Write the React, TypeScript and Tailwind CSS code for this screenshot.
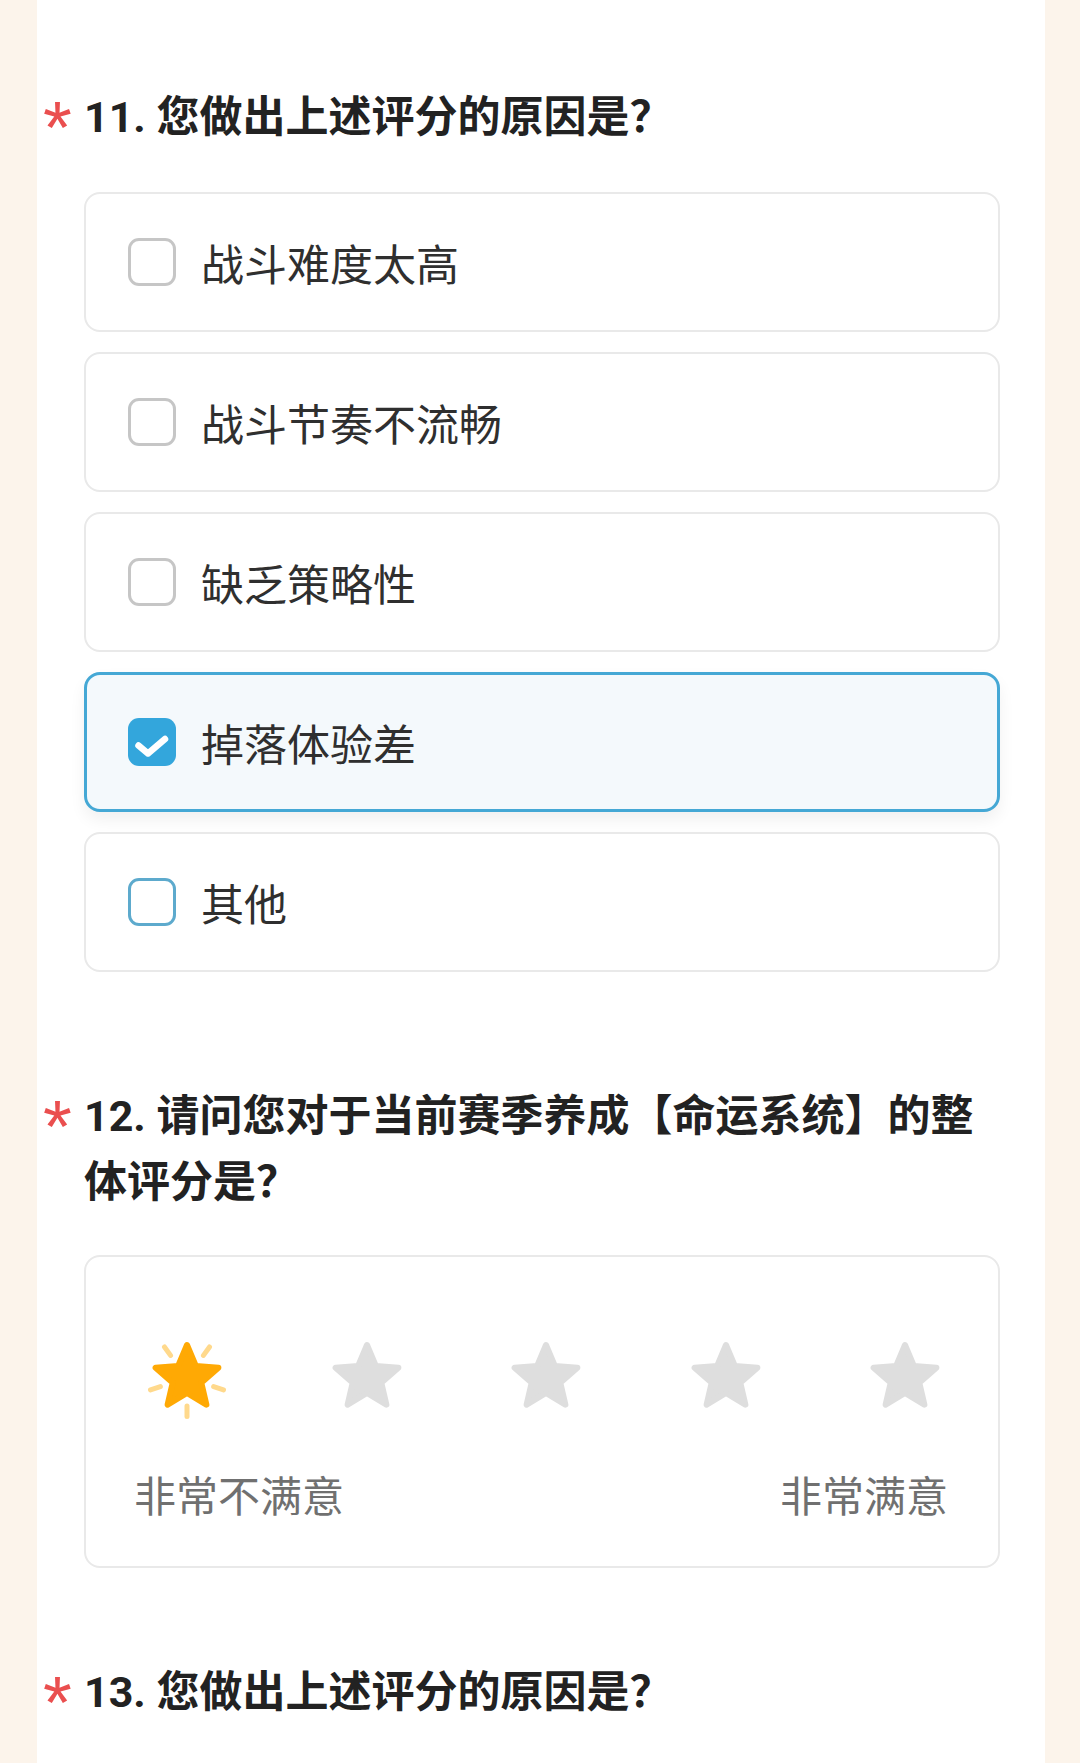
import React from "react";

type Option = { label: string; checked?: boolean; focus?: boolean };

const options: Option[] = [
  { label: "战斗难度太高" },
  { label: "战斗节奏不流畅" },
  { label: "缺乏策略性" },
  { label: "掉落体验差", checked: true },
  { label: "其他", focus: true },
];

const STAR_POINTS =
  "45,14 53.82,34.87 76.39,36.8 59.27,51.64 64.4,73.7 45,62 25.6,73.7 30.73,51.64 13.61,36.8 36.18,34.87";

function Star({ active }: { active?: boolean }) {
  const fill = active ? "#ffa904" : "#dedede";
  return (
    <svg width="90" height="90" viewBox="0 0 90 90" className="shrink-0">
      {active && (
        <g stroke="#ffd98c" strokeWidth="5" strokeLinecap="round">
          <line x1="61.46" y1="24.35" x2="67.5" y2="16" />
          <line x1="71.63" y1="55.65" x2="81.5" y2="58.9" />
          <line x1="45" y1="75" x2="45" y2="85.5" />
          <line x1="18.37" y1="55.65" x2="8.5" y2="58.9" />
          <line x1="28.54" y1="24.35" x2="22.5" y2="16" />
        </g>
      )}
      <polygon
        points={STAR_POINTS}
        fill={fill}
        stroke={fill}
        strokeWidth="6"
        strokeLinejoin="round"
      />
    </svg>
  );
}

function Checkbox({ checked, focus }: { checked?: boolean; focus?: boolean }) {
  if (checked) {
    return (
      <div className="w-[48px] h-[48px] shrink-0 rounded-[11px] bg-[#33a6dc] flex items-center justify-center">
        <svg width="48" height="48" viewBox="0 0 48 48">
          <path
            d="M10.5 27.5 L20 35.5 L37 21"
            fill="none"
            stroke="#fff"
            strokeWidth="6.5"
            strokeLinecap="round"
            strokeLinejoin="round"
          />
        </svg>
      </div>
    );
  }
  return (
    <div
      className={
        focus
          ? "w-[48px] h-[48px] shrink-0 rounded-[11px] border-[3px] border-[#5daacd] bg-white"
          : "w-[48px] h-[48px] shrink-0 rounded-[11px] border-[3px] border-[#c6c6c6] bg-white"
      }
    />
  );
}

function Title({ children }: { children: React.ReactNode }) {
  return (
    <div className="flex items-start">
      {/* fixed small height so the big glyph doesn't stretch the row */}
      <span className="-ml-[41px] w-[41px] h-[40px] mt-[7px] text-[74px] leading-none text-[#ea4f4f] font-['Liberation_Sans',sans-serif]">
        *
      </span>
      <h2 className="flex-1 text-[43px] leading-[66px] font-bold text-[#222]">{children}</h2>
    </div>
  );
}

export default function App() {
  return (
    <div className="min-h-[1763px] w-[1080px] bg-[#fcf4eb] font-['Roboto','Noto_Sans_CJK_SC',sans-serif]">
      <div className="ml-[37px] w-[1008px] min-h-[1763px] bg-white pl-[47px] pr-[45px] pt-[84px]">
        {/* Q11 */}
        <Title>11. 您做出上述评分的原因是？</Title>
        <div className="mt-[42px] flex flex-col gap-[20px]">
          {options.map((o) => (
            <div
              key={o.label}
              className={
                o.checked
                  ? "h-[140px] rounded-[16px] border-[3px] border-[#45a8d5] bg-[#f4f9fc] shadow-[0_8px_16px_rgba(0,0,0,0.06)] flex items-center pl-[41px] gap-[25px]"
                  : "h-[140px] rounded-[16px] border-2 border-[#e9e9e9] bg-white flex items-center pl-[42px] gap-[25px]"
              }
            >
              <Checkbox checked={o.checked} focus={o.focus} />
              <span className="text-[43px] leading-none text-[#2f2f2f] font-['Noto_Sans_CJK_SC',sans-serif]">
                {o.label}
              </span>
            </div>
          ))}
        </div>

        {/* Q12 */}
        <div className="mt-[111px]">
          <Title>12. 请问您对于当前赛季养成【命运系统】的整体评分是？</Title>
        </div>
        <div className="mt-[40px] rounded-[16px] border-2 border-[#e9e9e9] pt-[74px] pb-[42px]">
          <div className="flex justify-between pl-[56px] pr-[48px]">
            <Star active />
            <Star />
            <Star />
            <Star />
            <Star />
          </div>
          <div className="mt-[43px] flex justify-between pl-[48px] pr-[50px] text-[42px] leading-[60px] text-[#707070] font-['Noto_Sans_CJK_SC',sans-serif]">
            <span>非常不满意</span>
            <span>非常满意</span>
          </div>
        </div>

        {/* Q13 */}
        <div className="mt-[91px]">
          <Title>13. 您做出上述评分的原因是？</Title>
        </div>
      </div>
    </div>
  );
}
